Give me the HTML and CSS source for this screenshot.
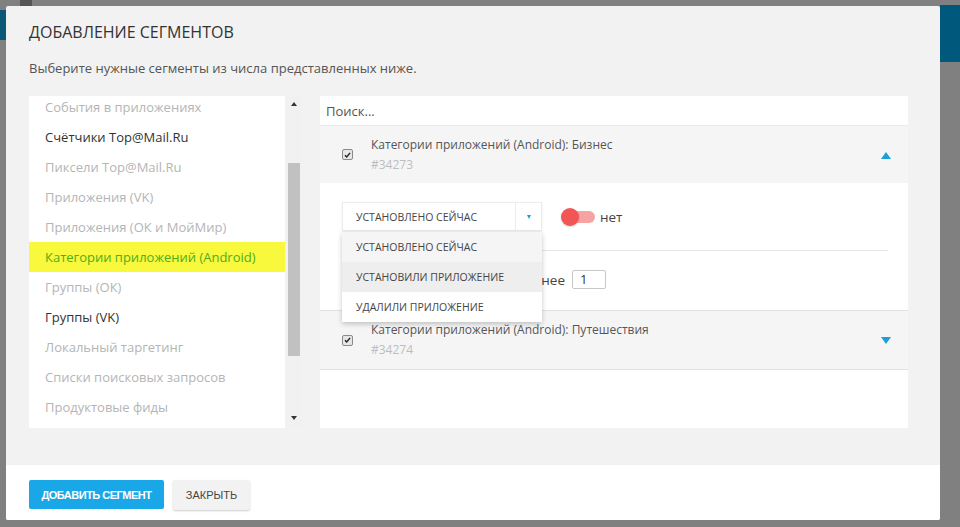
FILE: index.html
```html
<!DOCTYPE html>
<html lang="ru">
<head>
<meta charset="utf-8">
<title>Добавление сегментов</title>
<link rel="stylesheet" href="styles.css">
</head>
<body>
<div class="page">
  <div class="bg-top-block"></div>
  <div class="bg-strip-left"></div>
  <div class="bg-strip-right"></div>

  <div class="modal">
    <div class="modal-main">
      <h1 class="modal-title">ДОБАВЛЕНИЕ СЕГМЕНТОВ</h1>
      <p class="modal-sub">Выберите нужные сегменты из числа представленных ниже.</p>

      <div class="content">
        <div class="cat-box">
          <ul class="cat-list">
            <li class="cat off">События в приложениях</li>
            <li class="cat on">Счётчики Top@Mail.Ru</li>
            <li class="cat off">Пиксели Top@Mail.Ru</li>
            <li class="cat off">Приложения (VK)</li>
            <li class="cat off">Приложения (ОК и МойМир)</li>
            <li class="cat sel">Категории приложений (Android)</li>
            <li class="cat off">Группы (ОК)</li>
            <li class="cat on">Группы (VK)</li>
            <li class="cat off">Локальный таргетинг</li>
            <li class="cat off">Списки поисковых запросов</li>
            <li class="cat off">Продуктовые фиды</li>
          </ul>
          <div class="scrollbar">
            <span class="sb-arrow up"></span>
            <span class="sb-thumb"></span>
            <span class="sb-arrow down"></span>
          </div>
        </div>

        <div class="seg-box">
          <div class="search">Поиск...</div>

          <div class="seg-head">
            <span class="chk"><svg viewBox="0 0 10 10" width="10" height="10"><path d="M2.2 5.2 L4.1 7.2 L7.9 2.6" fill="none" stroke="#222" stroke-width="1.6"/></svg></span>
            <div class="seg-text">
              <div class="seg-name">Категории приложений (Android): Бизнес</div>
              <div class="seg-id">#34273</div>
            </div>
            <span class="tri tri-up"></span>
          </div>

          <div class="seg-body">
            <div class="row-top">
              <div class="select">
                <span class="select-val">УСТАНОВЛЕНО СЕЙЧАС</span>
                <span class="select-btn"><span class="mini-tri"></span></span>
                <ul class="menu">
                  <li class="mi mi-cur">УСТАНОВЛЕНО СЕЙЧАС</li>
                  <li class="mi mi-hover">УСТАНОВИЛИ ПРИЛОЖЕНИЕ</li>
                  <li class="mi">УДАЛИЛИ ПРИЛОЖЕНИЕ</li>
                </ul>
              </div>
              <span class="toggle"><span class="knob"></span></span>
              <span class="toggle-label">нет</span>
            </div>
            <div class="divider"></div>
            <div class="row-days">
              <span class="days-label"><span class="days-text">нее</span></span>
              <span class="num-input">1</span>
            </div>
          </div>

          <div class="seg-head seg-head2">
            <span class="chk"><svg viewBox="0 0 10 10" width="10" height="10"><path d="M2.2 5.2 L4.1 7.2 L7.9 2.6" fill="none" stroke="#222" stroke-width="1.6"/></svg></span>
            <div class="seg-text">
              <div class="seg-name">Категории приложений (Android): Путешествия</div>
              <div class="seg-id">#34274</div>
            </div>
            <span class="tri tri-down"></span>
          </div>
        </div>
      </div>
    </div>

    <div class="modal-footer">
      <button class="btn btn-primary">ДОБАВИТЬ СЕГМЕНТ</button>
      <button class="btn btn-plain">ЗАКРЫТЬ</button>
    </div>
  </div>
</div>
</body>
</html>
```

FILE: styles.css
```css
* { box-sizing: border-box; }

html, body {
  margin: 0;
  padding: 0;
}

body {
  background: #7f7f7f;
  font-family: "Open Sans", "Noto Sans", sans-serif;
}

.page {
  position: relative;
  width: 960px;
  height: 527px;
  overflow: hidden;
  background: #808080;
}

.bg-top-block {
  position: absolute;
  left: 20px;
  top: 0;
  width: 12px;
  height: 6px;
  background: #555;
}

.bg-strip-left {
  position: absolute;
  left: 0;
  top: 10px;
  width: 6px;
  height: 30px;
  background: #0b5778;
}

.bg-strip-right {
  position: absolute;
  right: 0;
  top: 5px;
  width: 20px;
  height: 57px;
  background: #00587c;
}

.modal {
  position: absolute;
  left: 6px;
  top: 6px;
  width: 934px;
  height: 514px;
  background: #f2f2f2;
  border-radius: 2px;
  display: flex;
  flex-direction: column;
  overflow: hidden;
}

.modal-main {
  height: 459px;
  padding: 0 23px;
}

.modal-title {
  margin: 15px 0 0;
  height: 22px;
  line-height: 22px;
  font-size: 16px;
  font-weight: 400;
  color: #333;
}

.modal-sub {
  margin: 15px 0 0;
  height: 20px;
  line-height: 20px;
  font-size: 13px;
  color: #555;
}

.content {
  margin-top: 18px;
  display: flex;
  gap: 18px;
  height: 332px;
}

/* left category list */
.cat-box {
  width: 273px;
  height: 332px;
  background: #fff;
  display: flex;
  overflow: hidden;
}

.cat-list {
  list-style: none;
  margin: -4px 0 0;
  padding: 0;
  width: 256px;
}

.cat {
  height: 30px;
  line-height: 31px;
  padding-left: 16px;
  font-size: 13px;
  white-space: nowrap;
}

.cat.off { color: #b5b5b5; }
.cat.on { color: #333; }
.cat.sel {
  background: #f8f83c;
  color: #4fae1c;
}

.scrollbar {
  width: 17px;
  height: 332px;
  background: #f1f1f1;
  display: flex;
  flex-direction: column;
  align-items: center;
}

.sb-arrow {
  width: 0;
  height: 0;
  border-left: 3.5px solid transparent;
  border-right: 3.5px solid transparent;
}

.sb-arrow.up {
  margin-top: 6px;
  border-bottom: 4px solid #333;
}

.sb-arrow.down {
  margin-top: auto;
  margin-bottom: 8px;
  border-top: 4px solid #333;
}

.sb-thumb {
  margin-top: 57px;
  width: 12px;
  height: 193px;
  background: #c1c1c1;
}

/* right segment panel */
.seg-box {
  width: 588px;
  height: 332px;
  background: #fff;
  display: flex;
  flex-direction: column;
}

.search {
  height: 30px;
  line-height: 30px;
  padding-left: 6px;
  font-size: 13px;
  color: #555;
  border-bottom: 1px solid #ebebeb;
}

.seg-head {
  height: 57px;
  background: #f5f5f5;
  display: flex;
  align-items: center;
  padding: 0 17px 0 22px;
}

.seg-head2 {
  height: 60px;
  border-top: 1px solid #e2e2e2;
  border-bottom: 1px solid #e2e2e2;
}

.chk {
  width: 11px;
  height: 11px;
  border: 1px solid #8a8a8a;
  border-radius: 2px;
  background: #e6e6e6;
  display: flex;
  align-items: center;
  justify-content: center;
  flex: none;
}

.chk svg { display: block; }

.seg-text {
  margin-left: 18px;
  flex: 1;
}

.seg-name {
  font-size: 12px;
  line-height: 20px;
  color: #555;
}

.seg-id {
  font-size: 12px;
  line-height: 20px;
  color: #bdbdbd;
}

.tri {
  width: 0;
  height: 0;
  border-left: 5px solid transparent;
  border-right: 5px solid transparent;
}

.tri-up { border-bottom: 7px solid #1c9ed9; margin-top: 1px; }
.tri-down { border-top: 7px solid #1c9ed9; margin-top: 1px; }

.seg-body {
  height: 127px;
  padding: 19px 20px 0 22px;
}

.row-top {
  display: flex;
  align-items: center;
  height: 29px;
}

.select {
  position: relative;
  width: 200px;
  height: 29px;
  background: #fff;
  border: 1px solid #ececec;
  box-shadow: 0 1px 2px rgba(0,0,0,0.08);
  display: flex;
  align-items: center;
}

.select-val {
  flex: 1;
  padding-left: 13px;
  font-size: 10.5px;
  color: #444;
  white-space: nowrap;
}

.select-btn {
  width: 26px;
  height: 27px;
  border-left: 1px solid #ececec;
  display: flex;
  align-items: center;
  justify-content: center;
}

.mini-tri {
  width: 0;
  height: 0;
  border-left: 2.5px solid transparent;
  border-right: 2.5px solid transparent;
  border-top: 4px solid #1c9ed9;
}

.menu {
  position: absolute;
  left: -1px;
  top: 29px;
  width: 200px;
  margin: 0;
  padding: 0;
  list-style: none;
  background: #fff;
  box-shadow: 0 2px 5px rgba(0,0,0,0.22);
  z-index: 5;
}

.mi {
  height: 30px;
  line-height: 31px;
  padding-left: 14px;
  font-size: 10.5px;
  color: #444;
  white-space: nowrap;
}

.mi-cur { background: #f5f5f5; }
.mi-hover { background: #eeeeee; }

.toggle {
  position: relative;
  margin-left: 20px;
  width: 33px;
  height: 12px;
  border-radius: 6px;
  background: #f8a3a3;
}

.knob {
  position: absolute;
  left: -1px;
  top: -3px;
  width: 18px;
  height: 18px;
  border-radius: 50%;
  background: #f25555;
  box-shadow: 0 1px 2px rgba(0,0,0,0.2);
}

.toggle-label {
  margin-left: 5px;
  font-size: 13.5px;
  color: #444;
}

.divider {
  margin-top: 19px;
  height: 1px;
  background: #e6e6e6;
}

.row-days {
  margin-top: 18px;
  display: flex;
  align-items: center;
  height: 20px;
}

.days-label {
  width: 223px;
  text-align: right;
  white-space: nowrap;
}

.days-text {
  font-size: 13.5px;
  color: #444;
}

.num-input {
  margin-left: 7px;
  width: 34px;
  height: 19px;
  border: 1px solid #c8c8c8;
  border-radius: 2px;
  font-size: 13px;
  line-height: 17px;
  padding-left: 7px;
  color: #333;
}

/* footer */
.modal-footer {
  height: 55px;
  background: #fff;
  padding: 15px 23px 0;
  display: flex;
  align-items: flex-start;
  gap: 9px;
}

.btn {
  height: 29px;
  border: none;
  border-radius: 2px;
  font-family: "Liberation Sans", Arial, sans-serif;
  font-size: 11px;
  padding: 0;
  cursor: pointer;
}

.btn-primary {
  width: 135px;
  background: #1aa7e7;
  color: #fff;
  font-weight: 700;
  letter-spacing: -0.5px;
}

.btn-plain {
  width: 77px;
  height: 30px;
  background: #f2f2f2;
  color: #444;
  box-shadow: 0 1px 2px rgba(0,0,0,0.2);
}
```
